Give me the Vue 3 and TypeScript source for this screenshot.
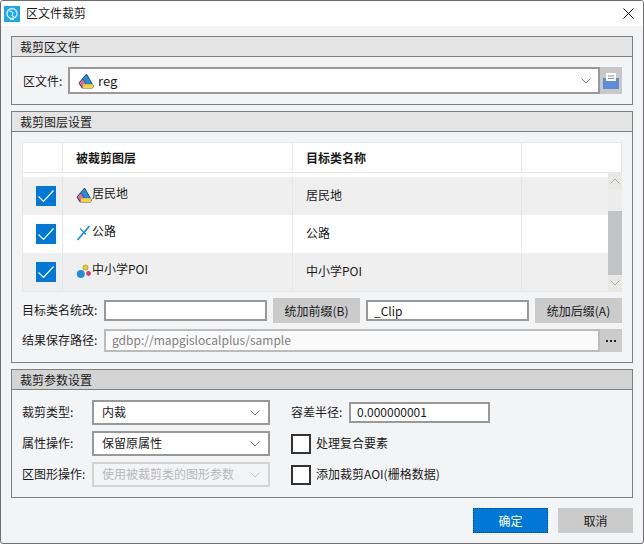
<script setup lang="ts">
interface LayerRow { name: string; target: string; icon: 'region' | 'line' | 'point' }
const rows: LayerRow[] = [
  { name: '居民地', target: '居民地', icon: 'region' },
  { name: '公路', target: '公路', icon: 'line' },
  { name: '中小学POI', target: '中小学POI', icon: 'point' },
]
</script>

<template>
  <div class="window">
    <header class="titlebar">
      <svg class="app-icon" width="16" height="16" viewBox="0 0 16 16">
        <rect width="16" height="16" fill="#1ba8ee" />
        <circle cx="8" cy="7.5" r="5" fill="none" stroke="#cfeefb" stroke-width="1.4" />
        <path d="M5 4.5l4 2-1 3 2 1.5M8 2.5v1M6 13.5h4" fill="none" stroke="#cfeefb" stroke-width="1.1" />
      </svg>
      <span class="title-text">区文件裁剪</span>
      <svg class="close" width="11" height="11" viewBox="0 0 11 11">
        <path d="M.5.5l10 10M10.5.5l-10 10" stroke="#111" stroke-width="1" fill="none" />
      </svg>
    </header>

    <main class="body">
      <section class="group">
        <h2 class="group-head">裁剪区文件</h2>
        <div class="group-content file-row">
          <label class="file-label">区文件:</label>
          <div class="field select file-select">
            <svg class="layer-icon" width="16" height="16" viewBox="0 0 16 16">
              <path d="M8.5 1L15.5 13 14.5 15H4L1 10z" fill="#1d8fe0" stroke="#1b3a57" stroke-width=".8" stroke-linejoin="round" />
              <path d="M1 10l4-4 3 5-3.4 3.6z" fill="#e7699c" stroke="#1b3a57" stroke-width=".6" />
              <path d="M5.5 11.2h9.2l.8 1.8-1 2H4.5z" fill="#fbd32c" />
            </svg>
            <span class="file-name">reg</span>
            <svg class="chevron" width="10" height="6" viewBox="0 0 10 6"><path d="M.5.5L5 5 9.5.5" fill="none" stroke="#777" /></svg>
          </div>
          <button class="save-btn" type="button" aria-label="保存">
            <svg width="16" height="16" viewBox="0 0 16 16">
              <rect x="0" y="5" width="16" height="11" fill="#5b8ddb" />
              <rect x="3" y="0" width="10" height="8" fill="#fff" />
              <path d="M5 3h6M5 5.5h6" stroke="#8d8d8d" stroke-width="1" />
            </svg>
          </button>
        </div>
      </section>

      <section class="group">
        <h2 class="group-head">裁剪图层设置</h2>
        <div class="group-content">
          <div class="table">
            <div class="thead">
              <div class="cell c1"></div>
              <div class="cell c2 bold">被裁剪图层</div>
              <div class="cell c3 bold">目标类名称</div>
              <div class="cell c4"></div>
            </div>
            <div class="tbody">
              <div class="spacer"></div>
              <div v-for="row in rows" :key="row.name" class="tr">
                <div class="cell c1 check-cell">
                  <svg width="20" height="20" viewBox="0 0 20 20">
                    <rect width="20" height="20" fill="#0078d7" />
                    <path d="M2.5 10.5l5 5L17.5 4.5" fill="none" stroke="#fff" stroke-width="1.2" />
                  </svg>
                </div>
                <div class="cell c2 name-cell">
                  <svg v-if="row.icon === 'region'" class="row-icon" width="16" height="16" viewBox="0 0 16 16">
                    <path d="M8.5 1L15.5 13 14.5 15H4L1 10z" fill="#1d8fe0" stroke="#1b3a57" stroke-width=".8" stroke-linejoin="round" />
                    <path d="M1 10l4-4 3 5-3.4 3.6z" fill="#e7699c" stroke="#1b3a57" stroke-width=".6" />
                    <path d="M5.5 11.2h9.2l.8 1.8-1 2H4.5z" fill="#fbd32c" />
                  </svg>
                  <svg v-else-if="row.icon === 'line'" class="row-icon" width="16" height="16" viewBox="0 0 16 16">
                    <path d="M1.5 15L13.5 1" stroke="#1d8fe0" stroke-width="1.8" fill="none" />
                    <path d="M4 3.5l6 6" stroke="#1d8fe0" stroke-width="1.3" fill="none" />
                  </svg>
                  <svg v-else class="row-icon" width="16" height="16" viewBox="0 0 16 16">
                    <circle cx="4.8" cy="11" r="4" fill="#1d8fe0" />
                    <circle cx="9.5" cy="4.5" r="2.6" fill="#f7c81e" stroke="#8a7a2e" stroke-width=".5" />
                    <circle cx="12.5" cy="10.5" r="2.4" fill="#d9376e" />
                  </svg>
                  <span>{{ row.name }}</span>
                </div>
                <div class="cell c3 target-cell">{{ row.target }}</div>
                <div class="cell c4"></div>
              </div>
            </div>
            <div class="scrollbar">
              <div class="scroll-arrow">
                <svg width="10" height="6" viewBox="0 0 10 6"><path d="M.5 5.5L5 1l4.5 4.5" fill="none" stroke="#aaa" /></svg>
              </div>
              <div class="scroll-track"><div class="scroll-thumb"></div></div>
              <div class="scroll-arrow">
                <svg width="10" height="6" viewBox="0 0 10 6"><path d="M.5.5L5 5 9.5.5" fill="none" stroke="#aaa" /></svg>
              </div>
            </div>
          </div>

          <div class="rename-row">
            <label class="form-label">目标类名统改:</label>
            <div class="field rename-input"></div>
            <button class="btn affix" type="button">统加前缀(B)</button>
            <div class="field rename-input suffix">_Clip</div>
            <button class="btn affix" type="button">统加后缀(A)</button>
          </div>

          <div class="path-row">
            <label class="form-label">结果保存路径:</label>
            <div class="field path-input"><span class="raised">gdbp://mapgislocalplus/sample</span></div>
            <button class="more-btn" type="button" aria-label="浏览">
              <i class="dot"></i><i class="dot"></i><i class="dot"></i>
            </button>
          </div>
        </div>
      </section>

      <section class="group">
        <h2 class="group-head dark">裁剪参数设置</h2>
        <div class="group-content params">
          <label class="param-label">裁剪类型:</label>
          <div class="field select param-select">
            <span class="raised">内裁</span>
            <svg class="chevron" width="10" height="6" viewBox="0 0 10 6"><path d="M.5.5L5 5 9.5.5" fill="none" stroke="#777" /></svg>
          </div>
          <div class="tolerance">
            <label class="raised">容差半径:</label>
            <div class="field tol-input"><span class="raised">0.000000001</span></div>
          </div>

          <label class="param-label">属性操作:</label>
          <div class="field select param-select">
            <span class="raised">保留原属性</span>
            <svg class="chevron" width="10" height="6" viewBox="0 0 10 6"><path d="M.5.5L5 5 9.5.5" fill="none" stroke="#777" /></svg>
          </div>
          <div class="check-row"><span class="checkbox"></span><span class="raised">处理复合要素</span></div>

          <label class="param-label">区图形操作:</label>
          <div class="field select param-select disabled">
            <span class="raised">使用被裁剪类的图形参数</span>
            <svg class="chevron" width="10" height="6" viewBox="0 0 10 6"><path d="M.5.5L5 5 9.5.5" fill="none" stroke="#c4c4c4" /></svg>
          </div>
          <div class="check-row"><span class="checkbox"></span><span class="raised">添加裁剪AOI(栅格数据)</span></div>
        </div>
      </section>

      <footer class="footer">
        <button class="btn action primary" type="button">确定</button>
        <button class="btn action" type="button">取消</button>
      </footer>
    </main>
  </div>
</template>

<style>
html, body { margin: 0; background: #fff; }
</style>

<style scoped>
.window {
  width: 644px;
  height: 544px;
  box-sizing: border-box;
  border: 1px solid #6e6e6e;
  border-radius: 3px;
  background: #f3f4f6;
  font-family: "Noto Sans CJK SC", "Noto Sans", sans-serif;
  font-size: 12px;
  line-height: 16px;
  color: #1a1a1a;
  display: flex;
  flex-direction: column;
  overflow: hidden;
}
.titlebar {
  height: 25px;
  flex: none;
  background: #fff;
  display: flex;
  align-items: center;
  padding: 0 9px 0 3px;
}
.app-icon { margin-top: 1px; }
.title-text { margin: 0 0 2px 6px; }
.close { margin-left: auto; }
.body {
  flex: 1;
  padding: 10px 10px 0;
  display: flex;
  flex-direction: column;
  gap: 6px;
}
.group {
  border: 1px solid #7f7f7f;
}
.group-head {
  margin: 0;
  height: 20px;
  box-sizing: border-box;
  border-bottom: 1px solid #7f7f7f;
  background: #e4e4e4;
  padding: 1px 0 0 8px;
  font-size: 12px;
  font-weight: 400;
  line-height: 17px;
}
.group-head.dark { background: #d4d4d4; }
.group-content {
  padding: 10px;
}
.raised { margin-bottom: 2px; }
.field {
  box-sizing: border-box;
  border: 2px solid #999;
  background: #fff;
  display: flex;
  align-items: center;
}
.select { position: relative; }
.chevron { margin-left: auto; }
.file-row {
  display: flex;
  align-items: center;
}
.file-label { width: 46px; padding-left: 1px; box-sizing: border-box; }
.file-select {
  width: 532px;
  height: 27px;
  padding: 0 7px 0 8px;
}
.layer-icon { flex: none; }
.file-name { margin-left: 4px; font-size: 13px; }
.save-btn {
  width: 22px;
  height: 27px;
  border: 0;
  padding: 0;
  background: #c8c8c8;
  display: flex;
  align-items: center;
  justify-content: center;
}
.table {
  position: relative;
  border-left: 1px solid #e6e6e6;
  border-right: 1px solid #e6e6e6;
  background: #fff;
}
.thead {
  display: flex;
  height: 31px;
  box-sizing: border-box;
  border-top: 1px solid #e6e6e6;
  border-bottom: 1px solid #e6e6e6;
}
.cell {
  box-sizing: border-box;
  display: flex;
  align-items: center;
  height: 100%;
  border-right: 1px solid #e6e6e6;
}
.c1 { width: 40px; }
.c2 { width: 230px; padding-left: 13px; }
.c3 { width: 229px; padding-left: 13px; }
.c4 { flex: 1; border-right: 0; }
.check-cell { padding-left: 13px; }
.bold { font-weight: 700; }
.tbody {
  height: 119px;
  box-sizing: border-box;
  border-bottom: 1px solid #e6e6e6;
}
.spacer { height: 4px; }
.tr {
  display: flex;
  height: 38px;
}
.tr:nth-of-type(even) { background: #efefef; }
.name-cell { padding-bottom: 6px; }
.target-cell { padding-bottom: 2px; }
.row-icon { flex: none; margin-top: 3px; }
.scrollbar {
  position: absolute;
  top: 31px;
  right: -1px;
  width: 14px;
  height: 118px;
  background: #ececec;
  display: flex;
  flex-direction: column;
}
.scroll-arrow {
  height: 16px;
  flex: none;
  background: #e8e8e4;
  display: flex;
  align-items: center;
  justify-content: center;
}
.scroll-track {
  flex: 1;
  padding-top: 22px;
}
.scroll-thumb {
  height: 64px;
  background: #c1c4c6;
}
.rename-row {
  display: flex;
  align-items: center;
  margin-top: 6px;
  height: 25px;
}
.form-label { width: 82px; flex: none; padding-bottom: 2px; }
.rename-input {
  width: 163px;
  height: 21px;
  padding-left: 6px;
}
.btn {
  border: 0;
  background: #cbcbcb;
  color: #1a1a1a;
  font: inherit;
  padding: 0;
}
.affix {
  width: 87px;
  height: 25px;
  margin-left: 6px;
}
.suffix { margin-left: 6px; }
.path-row {
  display: flex;
  align-items: center;
  margin-top: 6px;
  height: 23px;
}
.path-input {
  width: 496px;
  height: 23px;
  border-color: #bbb;
  background: #fafafa;
  color: #7f7f7f;
  padding-left: 6px;
}
.more-btn {
  width: 22px;
  height: 23px;
  border: 0;
  padding: 0;
  background: #cbcbcb;
  display: flex;
  align-items: center;
  justify-content: center;
  gap: 2px;
}
.dot {
  width: 2px;
  height: 2px;
  background: #222;
}
.params {
  display: grid;
  grid-template-columns: 70px 178px 1fr;
  grid-auto-rows: 25px;
  row-gap: 6px;
  align-items: center;
}
.param-label { padding-bottom: 2px; }
.param-select {
  height: 25px;
  padding: 0 8px 0 8px;
}
.param-select.disabled {
  background: transparent;
  border-color: #d4d4d4;
  color: #b8b8b8;
}
.tolerance,
.check-row {
  margin-left: 21px;
  display: flex;
  align-items: center;
}
.tolerance label { width: 58px; }
.tol-input {
  width: 141px;
  height: 21px;
  padding-left: 6px;
}
.checkbox {
  width: 20px;
  height: 20px;
  box-sizing: border-box;
  border: 2px solid #333;
  background: #fff;
  margin-right: 5px;
}
.footer {
  display: flex;
  justify-content: flex-end;
  gap: 10px;
  margin-top: 4px;
}
.action {
  width: 75px;
  height: 25px;
  font-size: 12px;
}
.primary {
  background: #0078d7;
  color: #fff;
  outline: 1px dotted #0a3fb0;
  outline-offset: -1px;
}
</style>
